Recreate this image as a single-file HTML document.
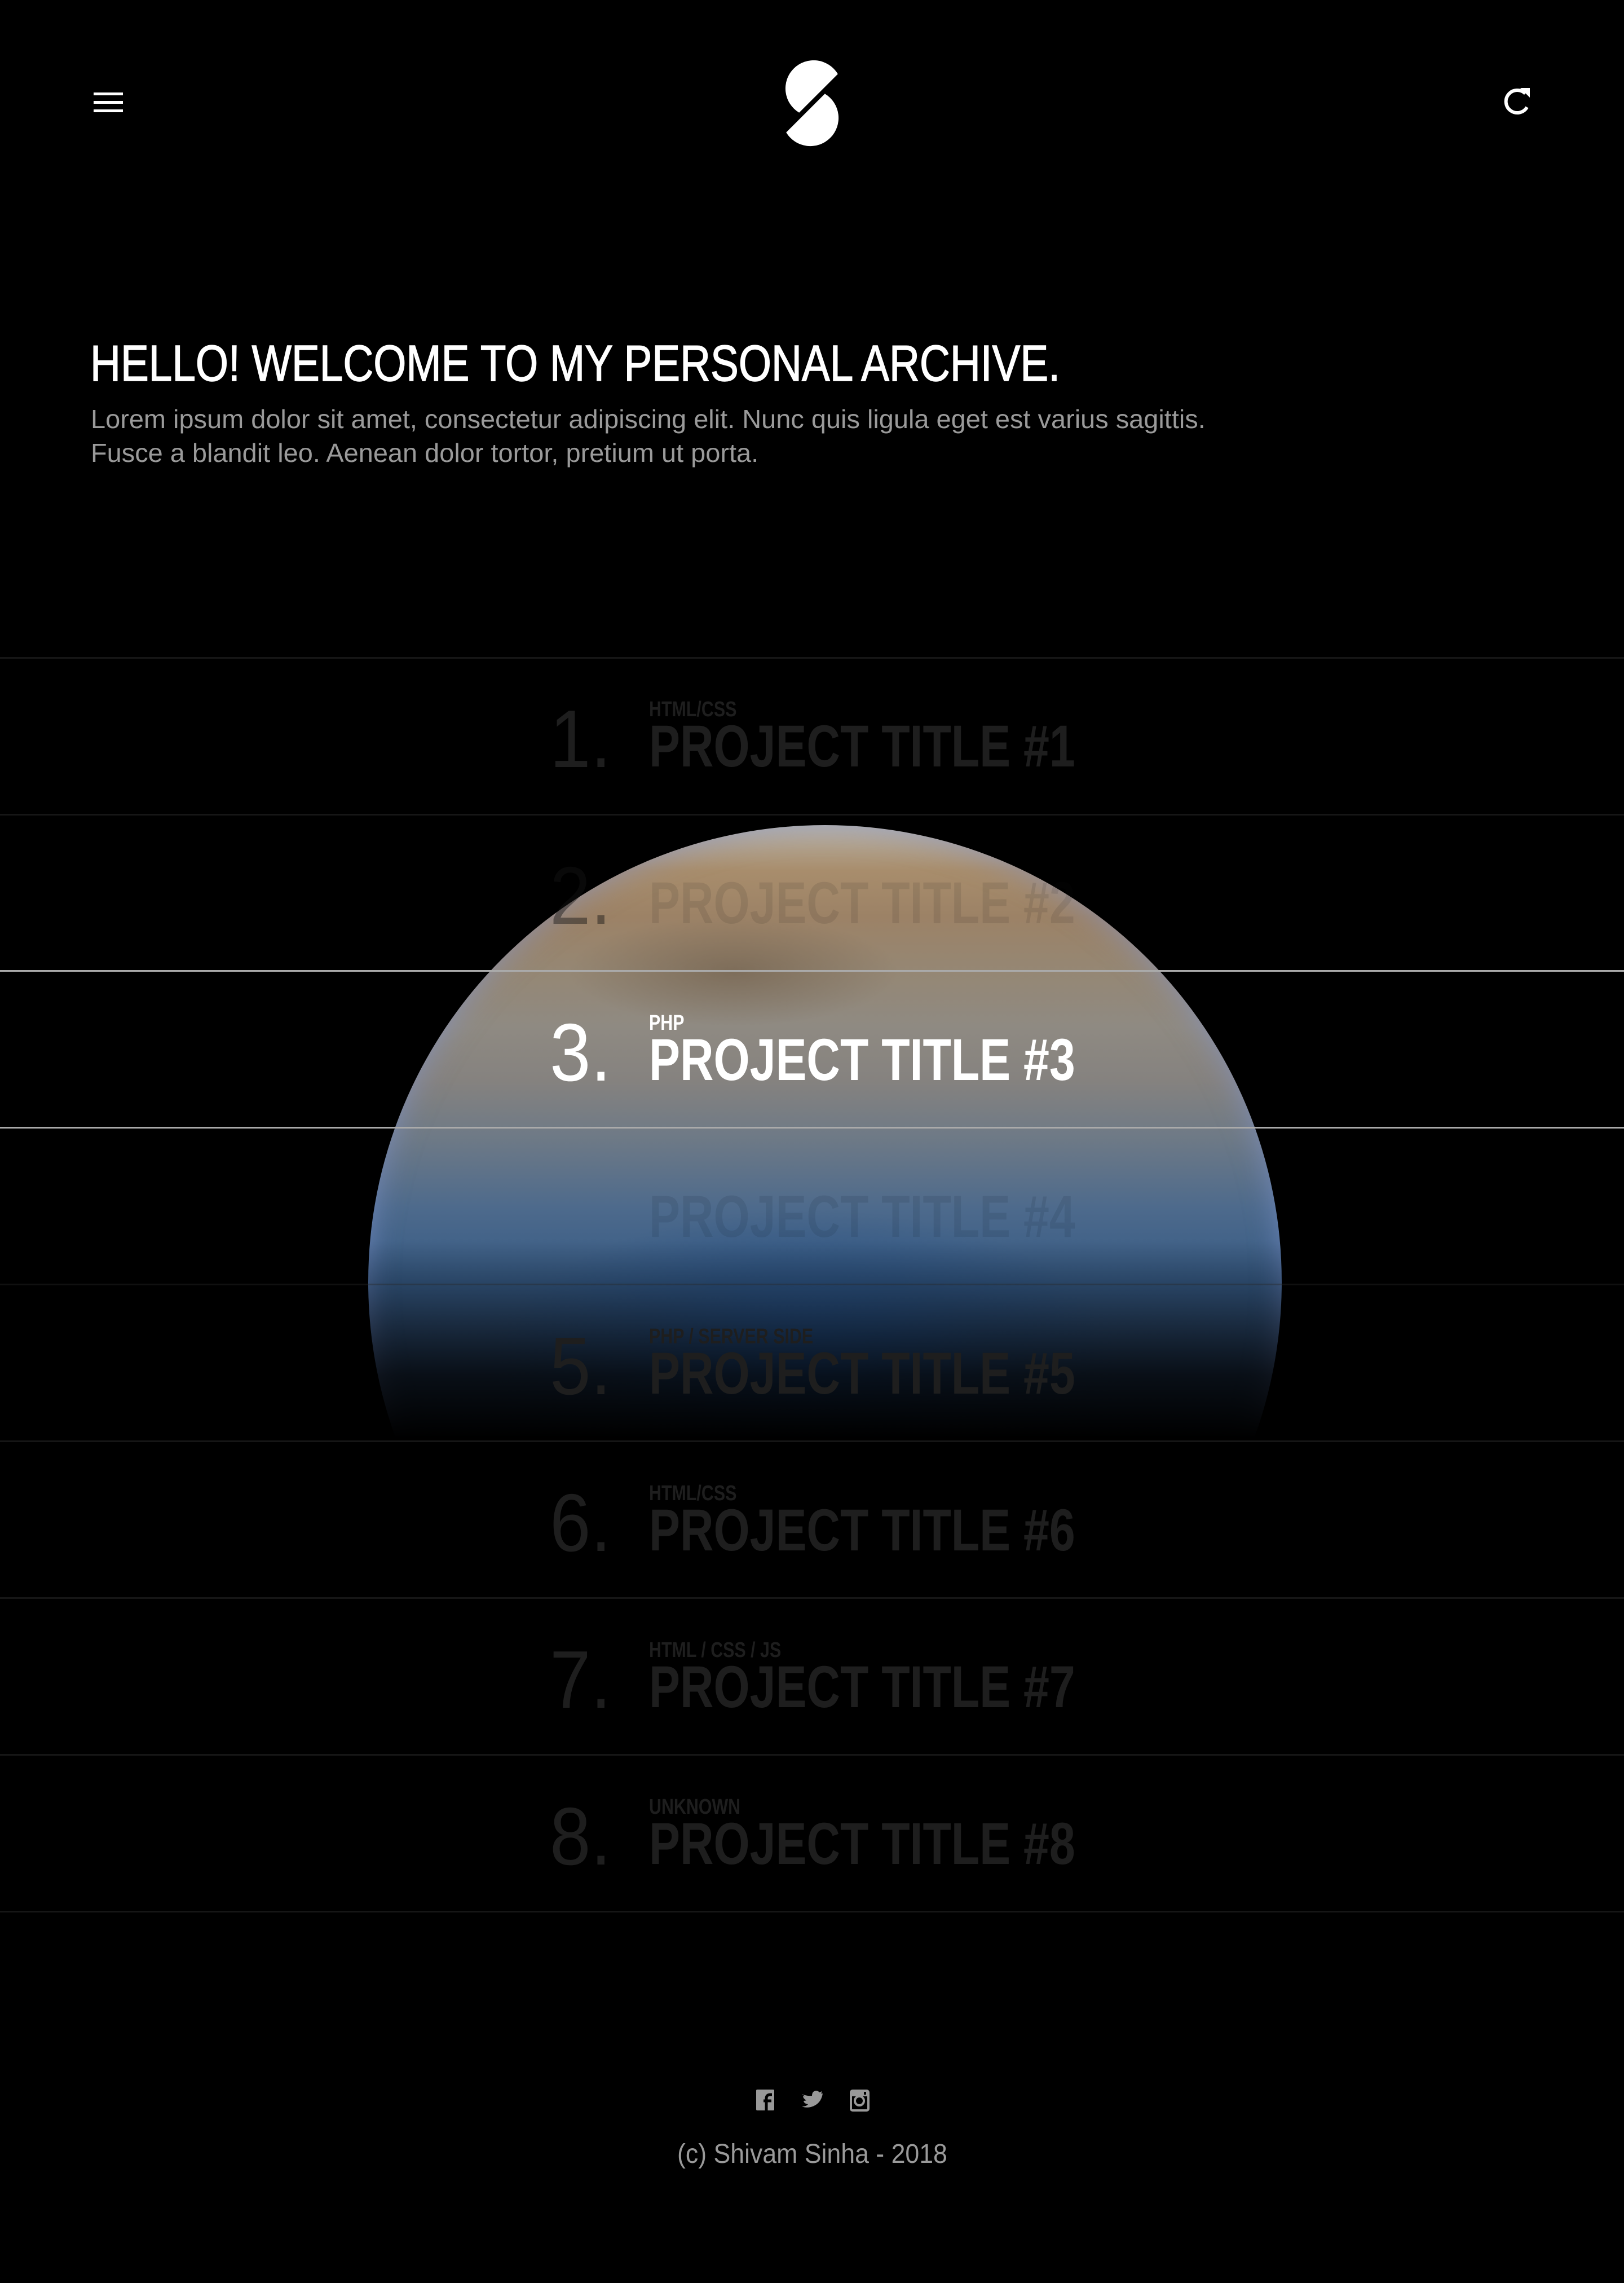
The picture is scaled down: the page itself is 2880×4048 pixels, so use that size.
<!DOCTYPE html>
<html><head><meta charset="utf-8"><style>
*{margin:0;padding:0}
body{width:2880px;height:4048px;background:#000;position:relative;overflow:hidden;font-family:"Liberation Sans",sans-serif}
.a{position:absolute;white-space:nowrap;line-height:1}
.sx{display:inline-block;transform-origin:0 0}
.line{position:absolute;left:0;width:2880px;height:3px;background:#161616}
.num{font-size:145px;color:#1e1e1e;left:975px}
.lab{font-size:38px;color:#1e1e1e;left:1151px;font-weight:bold}
.tit{font-size:105px;color:#1e1e1e;left:1151px;font-weight:bold}
.on{color:#fff}
</style></head><body>
<!-- planet -->
<div style="position:absolute;left:653px;top:1463px;width:1620px;height:1620px;border-radius:50%;overflow:hidden;
box-shadow:inset 0 0 50px rgba(130,150,210,.6);
background:
radial-gradient(ellipse 35% 18% at 48% 60%, rgba(35,85,150,.9) 0, rgba(40,80,130,.5) 60%, rgba(0,0,0,0) 100%),
radial-gradient(ellipse 18% 6% at 40% 16%, rgba(90,70,50,.4) 0, rgba(0,0,0,0) 100%),
linear-gradient(to bottom, #b9b2a6 0%, #a88d6c 5%, #9c8266 10%, #958774 16%, #8f8a82 22%, #85827f 28%, #6f7a86 34%, #4d6a8c 42%, #365a84 50%, #2c4a70 60%);"></div>
<div style="position:absolute;left:600px;top:2200px;width:1730px;height:920px;background:linear-gradient(to bottom,rgba(0,0,0,0) 0,rgba(0,0,0,.35) 12%,rgba(0,0,0,.8) 26%,#000 38%,#000 100%)"></div>
<!-- header -->
<svg class="a" style="left:166px;top:162px" width="52" height="40" viewBox="0 0 52 40"><rect x="0" y="2" width="52" height="5" fill="#fff"/><rect x="0" y="17" width="52" height="5" fill="#fff"/><rect x="0" y="32" width="52" height="5" fill="#fff"/></svg>
<svg class="a" style="left:0;top:0" width="2880" height="300"><path d="M1485.8,131.2 A50,50 0 1 0 1417.2,199.8 Z" fill="#fff"/><path d="M1462.8,166.2 A50,50 0 1 1 1394.2,234.8 Z" fill="#fff"/>
<path d="M2705,166 A20,20 0 1 0 2708,190" fill="none" stroke="#fff" stroke-width="6"/><path d="M2696,156 L2713,156 L2713,173 Z" fill="#fff"/></svg>
<!-- intro -->
<div class="a" style="left:160px;top:600px;font-size:90px;color:#fff;-webkit-text-stroke:1.5px #fff"><span class="sx" style="transform:scaleX(.83)">HELLO! WELCOME TO MY PERSONAL ARCHIVE.</span></div>
<div class="a" style="left:161px;top:713px;font-size:46px;line-height:60px;color:#9a9a9a"><span class="sx" style="transform:scaleX(1.02)">Lorem ipsum dolor sit amet, consectetur adipiscing elit. Nunc quis ligula eget est varius sagittis.<br>Fusce a blandit leo. Aenean dolor tortor, pretium ut porta.</span></div>
<!-- lines -->
<div class="line" style="top:1165px"></div><div class="line" style="top:1443px"></div>
<div class="line" style="top:1720px;background:#aaa"></div><div class="line" style="top:1998px;background:#aaa"></div>
<div class="line" style="top:2276px;background:rgba(40,40,40,.4)"></div><div class="line" style="top:2554px"></div><div class="line" style="top:2832px"></div><div class="line" style="top:3110px"></div><div class="line" style="top:3388px"></div>
<!-- rows -->
<div class="a num" style="top:1238px"><span class="sx" style="transform:scaleX(.9)">1.</span></div>
<div class="a lab" style="top:1239px"><span class="sx" style="transform:scaleX(.8)">HTML/CSS</span></div>
<div class="a tit" style="top:1271px"><span class="sx" style="transform:scaleX(.785)">PROJECT TITLE #1</span></div>

<div class="a num" style="top:1516px;color:rgba(20,20,20,.45)"><span class="sx" style="transform:scaleX(.9)">2.</span></div>
<div class="a tit" style="top:1549px;color:rgba(20,20,20,.1)"><span class="sx" style="transform:scaleX(.785)">PROJECT TITLE #2</span></div>

<div class="a num on" style="top:1794px"><span class="sx" style="transform:scaleX(.9)">3.</span></div>
<div class="a lab on" style="top:1795px"><span class="sx" style="transform:scaleX(.8)">PHP</span></div>
<div class="a tit on" style="top:1827px"><span class="sx" style="transform:scaleX(.785)">PROJECT TITLE #3</span></div>

<div class="a tit" style="top:2105px;color:rgba(20,30,50,.12)"><span class="sx" style="transform:scaleX(.785)">PROJECT TITLE #4</span></div>

<div class="a num" style="top:2350px"><span class="sx" style="transform:scaleX(.9)">5.</span></div>
<div class="a lab" style="top:2351px"><span class="sx" style="transform:scaleX(.8)">PHP / SERVER SIDE</span></div>
<div class="a tit" style="top:2383px"><span class="sx" style="transform:scaleX(.785)">PROJECT TITLE #5</span></div>

<div class="a num" style="top:2628px"><span class="sx" style="transform:scaleX(.9)">6.</span></div>
<div class="a lab" style="top:2629px"><span class="sx" style="transform:scaleX(.8)">HTML/CSS</span></div>
<div class="a tit" style="top:2661px"><span class="sx" style="transform:scaleX(.785)">PROJECT TITLE #6</span></div>

<div class="a num" style="top:2906px"><span class="sx" style="transform:scaleX(.9)">7.</span></div>
<div class="a lab" style="top:2907px"><span class="sx" style="transform:scaleX(.8)">HTML / CSS / JS</span></div>
<div class="a tit" style="top:2939px"><span class="sx" style="transform:scaleX(.785)">PROJECT TITLE #7</span></div>

<div class="a num" style="top:3184px"><span class="sx" style="transform:scaleX(.9)">8.</span></div>
<div class="a lab" style="top:3185px"><span class="sx" style="transform:scaleX(.8)">UNKNOWN</span></div>
<div class="a tit" style="top:3217px"><span class="sx" style="transform:scaleX(.785)">PROJECT TITLE #8</span></div>
<!-- footer -->
<svg class="a" style="left:0;top:3700px" width="2880" height="50">
<rect x="1341" y="5" width="32" height="37" rx="2" fill="#999"/><path d="M1359,42 V21 Q1359,14 1366,14 H1369 M1354,25 H1368" stroke="#000" stroke-width="5" fill="none"/>
<path d="M1422,13 Q1431,17 1440,16 Q1440,8 1447,7 Q1451,7 1453,10 L1458,8 L1456,12 L1459,12 Q1456,31 1438,36 Q1429,38 1422,35 Q1430,35 1433,31 Q1426,30 1425,25 Q1428,25 1430,24 Q1424,21 1424,16 Q1425,17 1428,17 Q1423,14 1422,13Z" fill="#999"/>
<rect x="1509" y="7" width="31" height="35" rx="3" fill="none" stroke="#999" stroke-width="4"/><rect x="1509" y="7" width="31" height="10" fill="#999"/><circle cx="1524" cy="25" r="8" fill="none" stroke="#999" stroke-width="4"/><rect x="1532" y="9" width="4" height="5" fill="#000"/>
</svg>
<div class="a" style="left:0;width:2880px;text-align:center;top:3796px;font-size:48px;color:#9a9a9a"><span class="sx" style="transform:scaleX(.93);transform-origin:50% 0">(c) Shivam Sinha - 2018</span></div>
</body></html>
